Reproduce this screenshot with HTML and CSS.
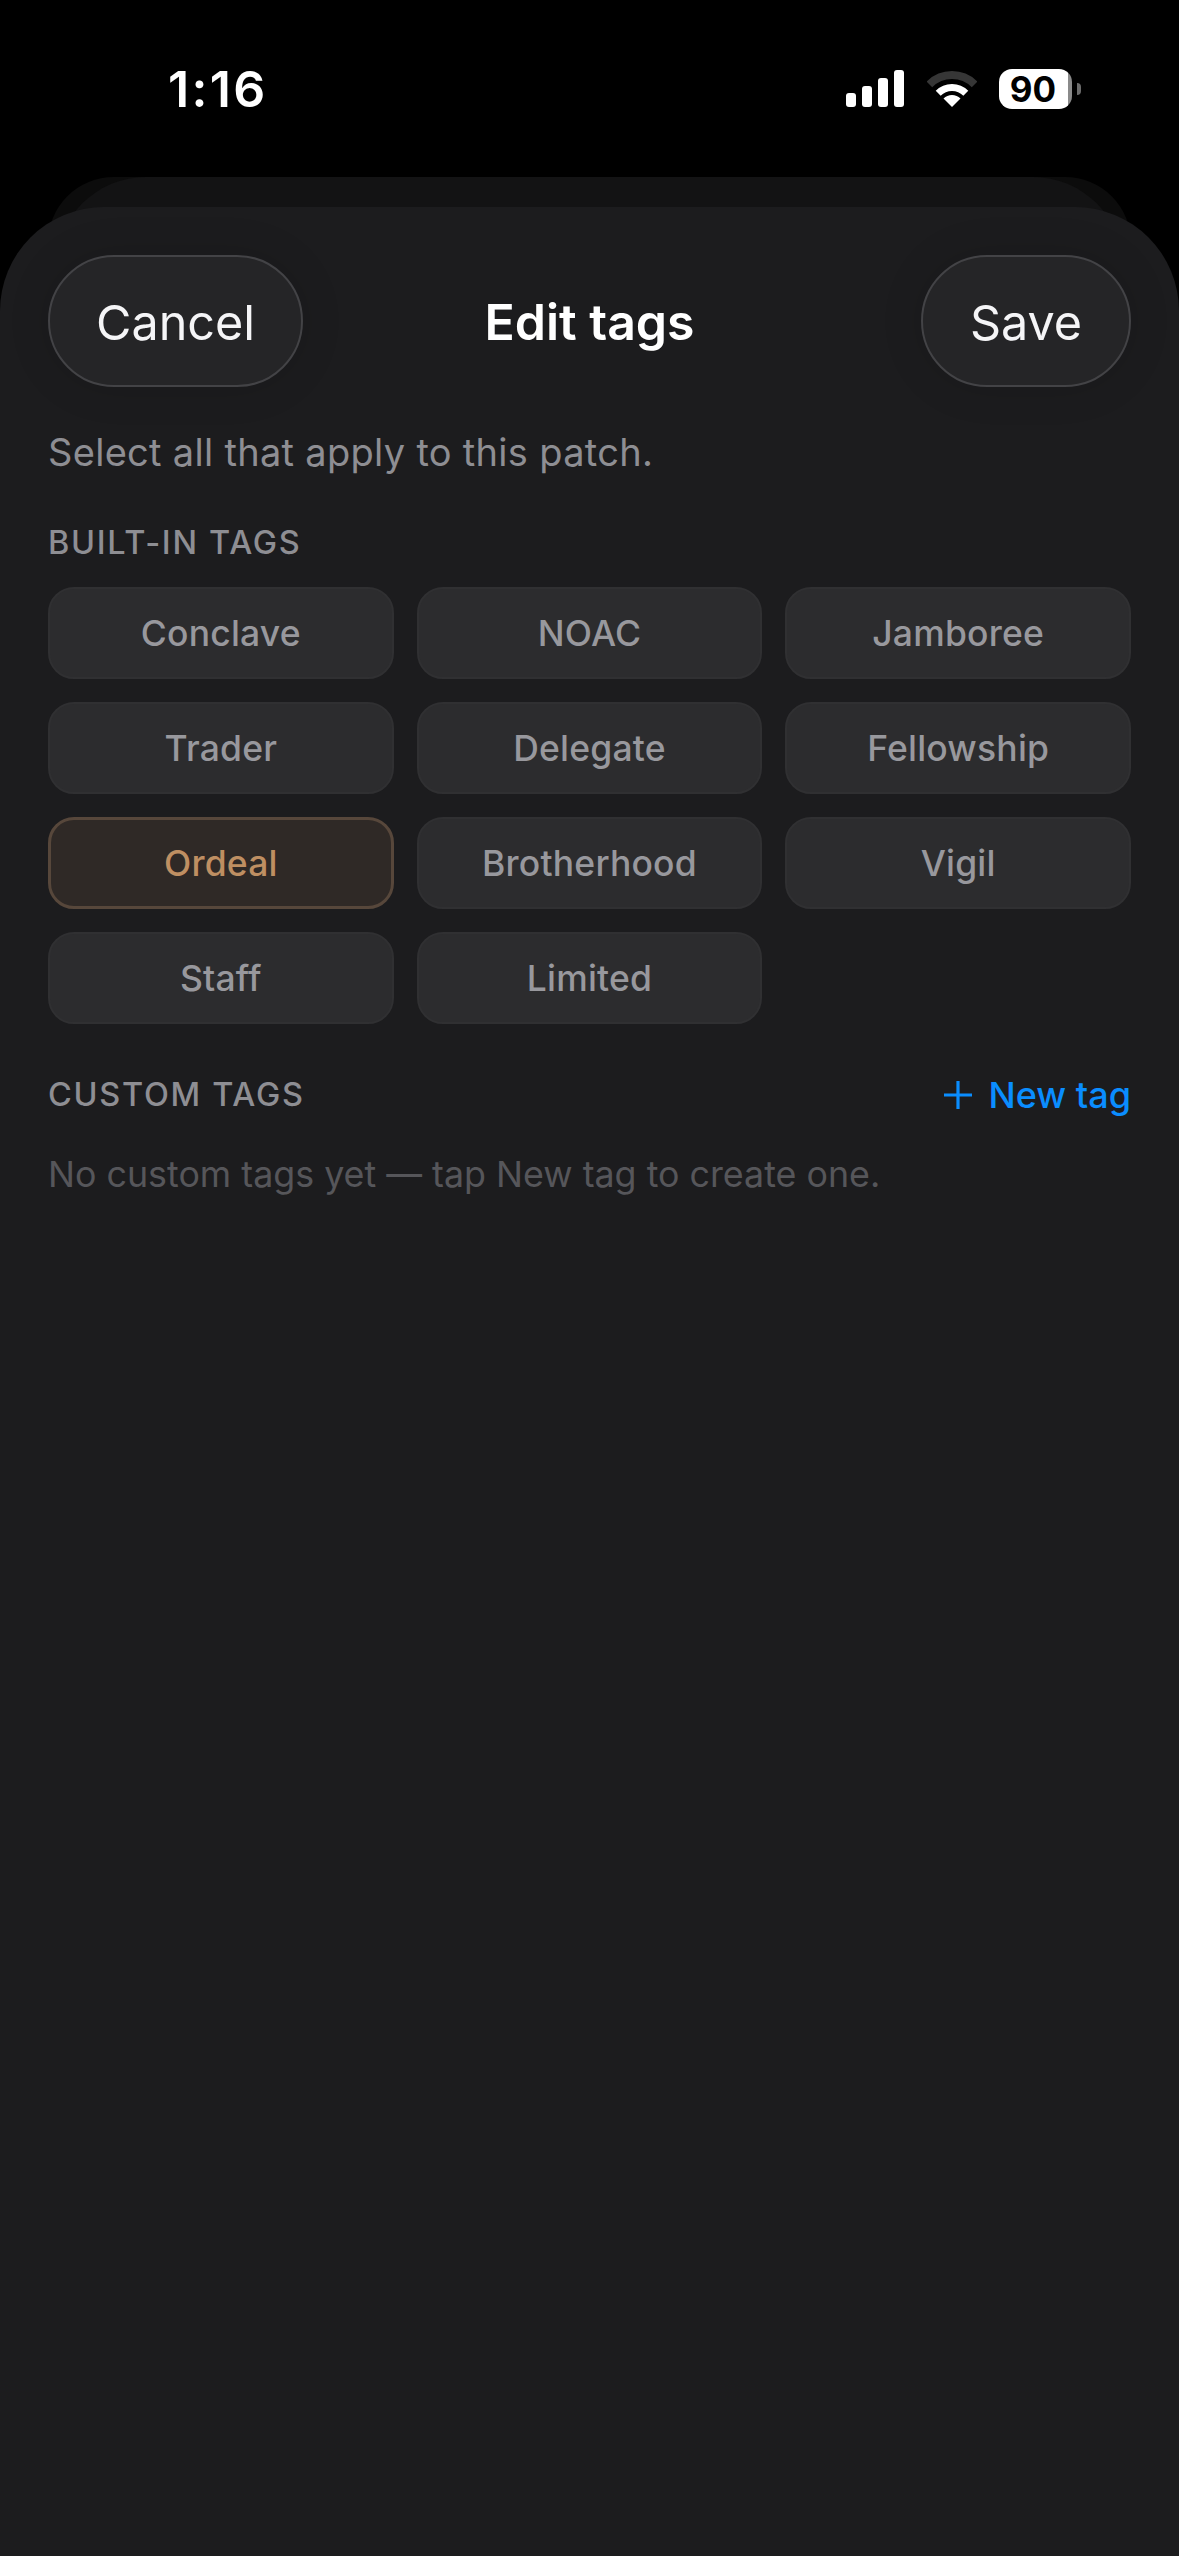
FILE: index.html
```html
<!DOCTYPE html>
<html>
<head>
    <meta charset="utf-8">
    <title>Edit tags</title>
    <link rel="stylesheet" href="styles.css">
</head>
<body>
    <div class="status-bar">
        <span class="time">1:16</span>
        <div class="status-icons">
            <svg class="signal" width="58" height="37" viewBox="0 0 58 37">
                <rect x="0" y="23" width="10" height="14" rx="3" fill="#fff"/>
                <rect x="16" y="16" width="10" height="21" rx="3" fill="#fff"/>
                <rect x="32" y="8" width="10" height="29" rx="3" fill="#fff"/>
                <rect x="48" y="0" width="10" height="37" rx="3" fill="#fff"/>
            </svg>
            <svg class="wifi" width="50" height="36" viewBox="0 0 50 36">
                <path d="M2.4 13.4A32 32 0 0 1 47.6 13.4" fill="none" stroke="#363636" stroke-width="8"/>
                <path d="M11.2 22.2A19.5 19.5 0 0 1 38.8 22.2" fill="none" stroke="#fff" stroke-width="7"/>
                <path d="M25 36L16.5 27.5A12 12 0 0 1 33.5 27.5Z" fill="#fff"/>
            </svg>
            <div class="battery">
                <div class="battery-body">90</div>
                <div class="battery-nub"></div>
            </div>
        </div>
    </div>

    <div class="stack">
        <div class="layer layer-far"></div>
        <div class="layer layer-mid"></div>

        <div class="sheet">
            <header class="sheet-header">
                <button class="glass-btn btn-left">Cancel</button>
                <h1 class="title">Edit tags</h1>
                <button class="glass-btn btn-right">Save</button>
            </header>

            <p class="hint">Select all that apply to this patch.</p>

            <h2 class="section-label">BUILT-IN TAGS</h2>
            <div class="tag-grid">
                <div class="tag">Conclave</div>
                <div class="tag">NOAC</div>
                <div class="tag">Jamboree</div>
                <div class="tag">Trader</div>
                <div class="tag">Delegate</div>
                <div class="tag">Fellowship</div>
                <div class="tag tag-on">Ordeal</div>
                <div class="tag">Brotherhood</div>
                <div class="tag">Vigil</div>
                <div class="tag">Staff</div>
                <div class="tag">Limited</div>
            </div>

            <div class="custom-head">
                <h2 class="section-label">CUSTOM TAGS</h2>
                <div class="new-tag">
                    <svg width="28" height="28" viewBox="0 0 28 28">
                        <path d="M0 14H28M14 0V28" stroke="#0a8dff" stroke-width="3.2" fill="none"/>
                    </svg>
                    <span>New tag</span>
                </div>
            </div>
            <p class="empty-note">No custom tags yet — tap New tag to create one.</p>
        </div>
    </div>
</body>
</html>
```

FILE: styles.css
```css
* {
    box-sizing: border-box;
}

body {
    margin: 0;
    width: 1179px;
    height: 2556px;
    background-color: #000;
    font-family: Inter, "Noto Sans", sans-serif;
    overflow: hidden;
    display: flex;
    flex-direction: column;
}

.status-bar {
    height: 177px;
    flex: none;
    display: flex;
    align-items: center;
    justify-content: space-between;
    padding: 0 98px 0 168px;
}

.time {
    color: #fff;
    font-size: 50px;
    font-weight: 600;
    letter-spacing: 2.3px;
}

.status-icons {
    display: flex;
    align-items: center;
}

.signal {
    margin-right: 23px;
}

.wifi {
    margin-right: 22px;
}

.battery {
    display: flex;
    align-items: center;
    gap: 5px;
}

.battery-body {
    width: 73px;
    height: 40px;
    border-radius: 13px;
    background: linear-gradient(90deg, #fff 94%, #8a8a8a 94%);
    color: #000;
    font-size: 35px;
    font-weight: 700;
    line-height: 40px;
    padding-right: 5px;
    text-align: center;
}

.battery-nub {
    width: 4px;
    height: 12px;
    border-radius: 0 6px 6px 0;
    background-color: #6b6b6b;
}

.stack {
    position: relative;
    flex: 1;
    display: flex;
    padding-top: 30px;
}

/* the sheets stacked behind the current one */
.layer {
    position: absolute;
    top: 0;
    bottom: 0;
}

.layer-far {
    left: 48px;
    right: 48px;
    border-radius: 66px 66px 0 0;
    background-color: #0c0c0c;
}

.layer-mid {
    left: 56px;
    right: 56px;
    border-radius: 90px 90px 0 0;
    background-color: #131314;
}

.sheet {
    position: relative;
    flex: 1;
    background-color: #1c1c1e;
    border-radius: 104px 104px 0 0;
    padding: 48px 48px 0;
}

.sheet-header {
    display: grid;
    grid-template-columns: 1fr auto 1fr;
    align-items: center;
}

.glass-btn {
    height: 132px;
    border: 2.5px solid #434346;
    border-radius: 66px;
    background-color: #252527;
    box-shadow: 0 0 44px rgba(0, 0, 0, 0.12);
    color: #f5f5f7;
    font-family: inherit;
    font-size: 48.5px;
    font-weight: 400;
    padding: 3px 0 0;
}

.btn-left {
    justify-self: start;
    width: 255px;
}

.btn-right {
    justify-self: end;
    width: 210px;
}

.title {
    margin: 0;
    padding-top: 2px;
    color: #fff;
    font-size: 50px;
    font-weight: 600;
}

.hint {
    margin: 42px 0 0;
    color: #8e8e93;
    font-size: 38px;
    letter-spacing: 0.3px;
    line-height: 46px;
}

.section-label {
    margin: 0;
    color: #8e8e93;
    font-size: 32.5px;
    font-weight: 500;
    letter-spacing: 1.7px;
    line-height: 40px;
}

.hint + .section-label {
    margin-top: 48px;
}

.tag-grid {
    display: grid;
    grid-template-columns: repeat(3, 1fr);
    gap: 23px;
    margin-top: 24px;
}

.tag {
    height: 92px;
    display: flex;
    align-items: center;
    justify-content: center;
    background-color: #2c2c2e;
    border: 2px solid #303032;
    border-radius: 26px;
    color: #98989d;
    font-size: 35.5px;
    font-weight: 500;
    letter-spacing: 0.2px;
}

.tag-on {
    background-color: #2f2926;
    border: 3px solid #57473b;
    color: #bf8f62;
}

.custom-head {
    display: flex;
    align-items: center;
    justify-content: space-between;
    margin-top: 49px;
}

.new-tag {
    display: flex;
    align-items: center;
    gap: 17px;
    color: #0a8dff;
    font-size: 36px;
    font-weight: 500;
}

.empty-note {
    margin: 35px 0 0;
    color: #56565a;
    font-size: 35.8px;
    line-height: 44px;
}
```
